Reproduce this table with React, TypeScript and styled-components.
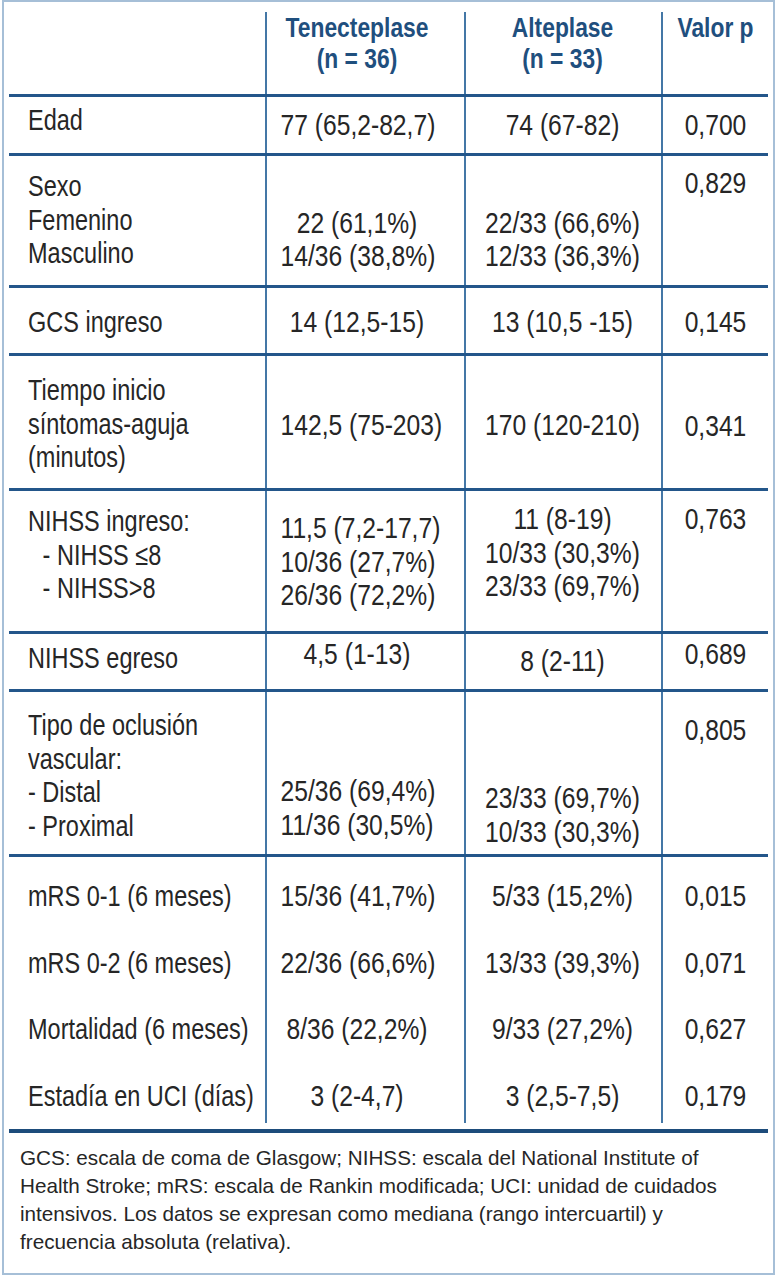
import React from 'react';
import styled, { createGlobalStyle } from 'styled-components';

const GlobalStyle = createGlobalStyle`
  html, body { margin: 0; padding: 0; background: #ffffff; }
  body { width: 780px; height: 1277px; overflow: hidden; }
`;

const COLS = '256px 199px 197px 107px';
const RULE = '#23568a';
const VLINE = '#4477a6';
const INK = '#262626';
const HEAD = '#1f4f7e';

const Frame = styled.div`
  box-sizing: border-box;
  margin-left: 2px;
  width: 773px;
  height: 1275px;
  border: 2px solid #a6bfd7;
  padding: 10px 5px 0 5px;
  background: #fff;
  font-family: "Liberation Sans", Arial, sans-serif;
  color: ${INK};
`;

const Row = styled.div<{ $h: number; $rule: boolean }>`
  box-sizing: border-box;
  display: grid;
  grid-template-columns: ${COLS};
  height: ${(p) => p.$h}px;
  border-bottom: ${(p) => (p.$rule ? `3px solid ${RULE}` : 'none')};
`;

const LabelCell = styled.div<{ $pt: number }>`
  padding: ${(p) => p.$pt}px 0 0 19px;
  font-size: 29px;
  line-height: 33.5px;
  text-align: left;
`;

const ValueCell = styled.div<{ $pt: number; $pr: number }>`
  border-left: 2px solid ${VLINE};
  padding: ${(p) => p.$pt}px ${(p) => p.$pr}px 0 0;
  font-size: 29px;
  line-height: 33.5px;
  text-align: center;
`;

const HeadCell = styled.div<{ $pr: number; $line: boolean }>`
  border-left: ${(p) => (p.$line ? `2px solid ${VLINE}` : 'none')};
  padding: 0 ${(p) => p.$pr}px 0 0;
  font-size: 28px;
  line-height: 31px;
  font-weight: 700;
  color: ${HEAD};
  text-align: center;
`;

/* Condensed face is not installed: narrow the Arial-metric text horizontally. */
const LabelLine = styled.div<{ $indent?: boolean }>`
  white-space: pre;
  height: 33.5px;
  padding-left: ${(p) => (p.$indent ? 18 : 0)}px;
  transform: scaleX(0.81);
  transform-origin: left center;
`;

const ValueLine = styled.div`
  white-space: pre;
  height: 33.5px;
  transform: scaleX(0.85);
  transform-origin: center center;
`;

const HeadLine = styled.div`
  white-space: pre;
  height: 31px;
  transform: scaleX(0.815);
  transform-origin: center center;
`;

const Footer = styled.div`
  margin-top: 6px;
  border-top: 4px solid #1d4c7b;
  padding: 11px 0 0 11px;
  font-size: 20.7px;
  line-height: 28px;
  color: ${INK};
`;

const FootLine = styled.div`
  white-space: nowrap;
`;

type L = string | { t: string; indent: boolean };
type CellSpec = { pt: number; lines: L[] };
type RowSpec = {
  h: number;
  rule: boolean;
  label: CellSpec;
  ten: CellSpec;
  alt: CellSpec;
  p: CellSpec;
};

const c = (pt: number, ...lines: L[]): CellSpec => ({ pt, lines });
const ind = (t: string): L => ({ t, indent: true });

const rows: RowSpec[] = [
  { h: 59, rule: true, label: c(7, 'Edad'), ten: c(12, '77 (65,2-82,7)'), alt: c(12, '74 (67-82)'), p: c(12, '0,700') },
  {
    h: 132, rule: true,
    label: c(14, 'Sexo', 'Femenino', 'Masculino'),
    ten: c(17, '', '22 (61,1%)', '14/36 (38,8%)'),
    alt: c(17, '', '22/33 (66,6%)', '12/33 (36,3%)'),
    p: c(11, '0,829'),
  },
  { h: 68, rule: true, label: c(18, 'GCS ingreso'), ten: c(18, '14 (12,5-15)'), alt: c(18, '13 (10,5 -15)'), p: c(18, '0,145') },
  {
    h: 135, rule: true,
    label: c(18, 'Tiempo inicio', 'síntomas-aguja', '(minutos)'),
    ten: c(19, '', '142,5 (75-203)'),
    alt: c(19, '', '170 (120-210)'),
    p: c(20, '', '0,341'),
  },
  {
    h: 143, rule: true,
    label: c(14, 'NIHSS ingreso:', ind('- NIHSS ≤8'), ind('- NIHSS>8')),
    ten: c(21, '11,5 (7,2-17,7)', '10/36 (27,7%)', '26/36 (72,2%)'),
    alt: c(12, '11 (8-19)', '10/33 (30,3%)', '23/33 (69,7%)'),
    p: c(12, '0,763'),
  },
  { h: 58, rule: true, label: c(8, 'NIHSS egreso'), ten: c(4, '4,5 (1-13)'), alt: c(11, '8 (2-11)'), p: c(4, '0,689') },
  {
    h: 165, rule: true,
    label: c(17, 'Tipo de oclusión', 'vascular:', '- Distal', '- Proximal'),
    ten: c(16, '', '', '25/36 (69,4%)', '11/36 (30,5%)'),
    alt: c(23, '', '', '23/33 (69,7%)', '10/33 (30,3%)'),
    p: c(22, '0,805'),
  },
  { h: 67, rule: false, label: c(23, 'mRS 0-1 (6 meses)'), ten: c(23, '15/36 (41,7%)'), alt: c(23, '5/33 (15,2%)'), p: c(23, '0,015') },
  { h: 66, rule: false, label: c(23, 'mRS 0-2 (6 meses)'), ten: c(23, '22/36 (66,6%)'), alt: c(23, '13/33 (39,3%)'), p: c(23, '0,071') },
  { h: 67, rule: false, label: c(23, 'Mortalidad (6 meses)'), ten: c(23, '8/36 (22,2%)'), alt: c(23, '9/33 (27,2%)'), p: c(23, '0,627') },
  { h: 66, rule: false, label: c(23, 'Estadía en UCI (días)'), ten: c(23, '3 (2-4,7)'), alt: c(23, '3 (2,5-7,5)'), p: c(23, '0,179') },
];

const renderLabel = (lines: L[]) =>
  lines.map((l, i) =>
    typeof l === 'string' ? (
      <LabelLine key={i}>{l}</LabelLine>
    ) : (
      <LabelLine key={i} $indent={l.indent}>
        {l.t}
      </LabelLine>
    )
  );

const renderValue = (lines: L[]) =>
  lines.map((l, i) => <ValueLine key={i}>{typeof l === 'string' ? l : l.t}</ValueLine>);

const footnote = [
  'GCS: escala de coma de Glasgow; NIHSS: escala del National Institute of',
  'Health Stroke; mRS: escala de Rankin modificada; UCI: unidad de cuidados',
  'intensivos. Los datos se expresan como mediana (rango intercuartil) y',
  'frecuencia absoluta (relativa).',
];

export default function App() {
  return (
    <>
      <GlobalStyle />
      <Frame>
        <Row $h={85} $rule>
          <HeadCell $pr={0} $line={false} />
          <HeadCell $pr={17} $line>
            <HeadLine>Tenecteplase</HeadLine>
            <HeadLine>(n = 36)</HeadLine>
          </HeadCell>
          <HeadCell $pr={2} $line>
            <HeadLine>Alteplase</HeadLine>
            <HeadLine>(n = 33)</HeadLine>
          </HeadCell>
          <HeadCell $pr={0} $line>
            <HeadLine>Valor p</HeadLine>
          </HeadCell>
        </Row>
        {rows.map((r, i) => (
          <Row key={i} $h={r.h} $rule={r.rule}>
            <LabelCell $pt={r.label.pt}>{renderLabel(r.label.lines)}</LabelCell>
            <ValueCell $pt={r.ten.pt} $pr={17}>{renderValue(r.ten.lines)}</ValueCell>
            <ValueCell $pt={r.alt.pt} $pr={2}>{renderValue(r.alt.lines)}</ValueCell>
            <ValueCell $pt={r.p.pt} $pr={0}>{renderValue(r.p.lines)}</ValueCell>
          </Row>
        ))}
        <Footer>
          {footnote.map((t, i) => (
            <FootLine key={i}>{t}</FootLine>
          ))}
        </Footer>
      </Frame>
    </>
  );
}
